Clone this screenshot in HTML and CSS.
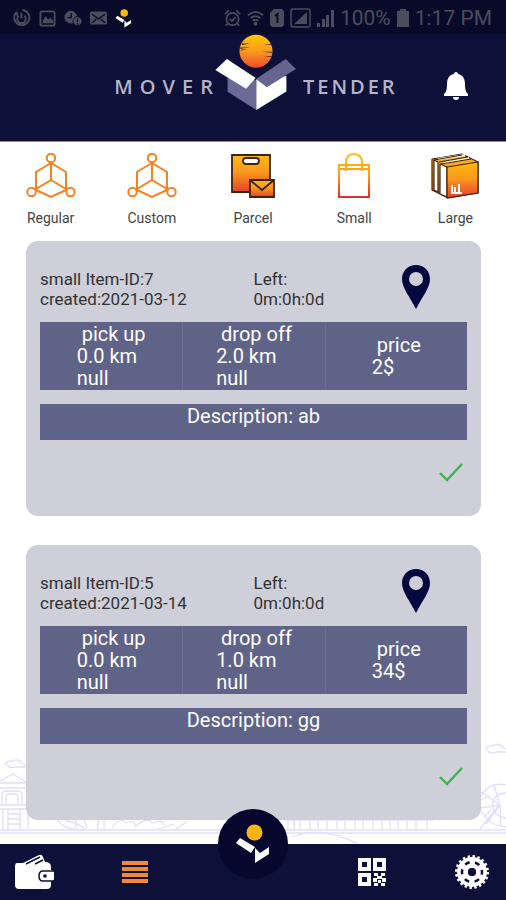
FILE: index.html
```html
<!DOCTYPE html>
<html lang="en">
<head>
<meta charset="utf-8">
<meta name="viewport" content="width=device-width, initial-scale=1">
<title>Mover Tender</title>
<link rel="stylesheet" href="styles.css">
</head>
<body>
<svg class="defs" aria-hidden="true">
  <defs>
    <linearGradient id="sun" x1="0" y1="0" x2="0" y2="1"><stop offset="0" stop-color="#ffc800"/><stop offset=".5" stop-color="#fb9a1c"/><stop offset="1" stop-color="#ef4a30"/></linearGradient>
    <linearGradient id="fire" x1="0" y1="0" x2="0" y2="1"><stop offset="0" stop-color="#fdb913"/><stop offset=".45" stop-color="#f99a1c"/><stop offset="1" stop-color="#e8402a"/></linearGradient>
    <linearGradient id="bagline" gradientUnits="userSpaceOnUse" x1="0" y1="0" x2="0" y2="46"><stop offset="0" stop-color="#fdc010"/><stop offset=".5" stop-color="#f99a1c"/><stop offset="1" stop-color="#dc2430"/></linearGradient>
    <symbol id="cube" viewBox="0 0 50 46">
      <g fill="none" stroke="#f58220" stroke-width="2">
        <circle cx="25" cy="5" r="4.200"/><circle cx="5.500" cy="39" r="4.200"/><circle cx="44.500" cy="39" r="4.200"/>
        <path d="M25 10 10 19v18l15 7 15-7V19L25 10v17L10 36M25 27l15 9"/>
      </g>
    </symbol>
    <symbol id="mark" viewBox="0 0 36 40">
      <circle cx="19.500" cy="8.500" r="8" fill="#fdb515"/>
      <path fill="#fff" d="M5 14 20 23l-4 6L1 19zM20 24l5 5 9-6v7L20 39z"/>
    </symbol>
    <symbol id="pin" viewBox="0 0 28 44"><path fill="#05073f" fill-rule="evenodd" d="M14 0C6 0 0 6 0 14c0 9 8 18 14 30 6-12 14-21 14-30C28 6 22 0 14 0zm0 7a7 7 0 1 1 0 14 7 7 0 0 1 0-14z"/></symbol>
    <symbol id="check" viewBox="0 0 26 20"><path d="m2 11 7 7L24 2" fill="none" stroke="#3db54a" stroke-width="2.400"/></symbol>
  </defs>
</svg>

<div class="app">
  <div class="status">
    <div class="status-group">
      <svg width="19" height="19" viewBox="0 0 20 20"><g fill="none" stroke="currentColor" stroke-width="2"><path d="M5 3a8 8 0 1 0 6-2M5 3v4M7 7a4.500 4.500 0 1 0 6 0M10 4v6"/></g></svg>
      <svg width="17" height="17" viewBox="0 0 18 18"><rect x="1.500" y="1.500" width="15" height="15" rx="2" fill="none" stroke="currentColor" stroke-width="2"/><path fill="currentColor" d="m4 14 0-3 3-4 3 3 2-2 3 4v2z"/></svg>
      <svg width="18" height="17" viewBox="0 0 20 18"><circle cx="7.500" cy="7.500" r="7" fill="currentColor"/><circle cx="15" cy="12" r="5" fill="currentColor" stroke="#0a0b2b"/><path d="M8 3v5H4M15 9v4M15 14v2" fill="none" stroke="#0a0b2b" stroke-width="1.500"/></svg>
      <svg width="17" height="14" viewBox="0 0 18 14"><rect width="18" height="14" rx="2" fill="currentColor"/><path d="m2 3 7 5 7-5M2 12l5-4M16 12l-5-4" fill="none" stroke="#0a0b2b" stroke-width="1.500"/></svg>
      <svg width="17" height="19"><use href="#mark"/></svg>
    </div>
    <div class="status-group status-right">
      <svg width="17" height="18" viewBox="0 0 18 18"><g fill="none" stroke="currentColor" stroke-width="1.800"><circle cx="9" cy="10" r="6.500"/><path d="m6 10 2.500 2.500L12 8M1 5l4-4M17 5l-4-4M4 15l-2 2M14 15l2 2"/></g></svg>
      <svg width="17" height="16" viewBox="0 0 18 16"><g fill="none" stroke="currentColor" stroke-width="2"><path d="M1 5q8-7 16 0M4 8q5-4 10 0M6 11q3-2 6 0"/></g><circle cx="9" cy="14" r="2" fill="currentColor"/></svg>
      <svg width="14" height="18" viewBox="0 0 14 18"><path fill="currentColor" d="M4 0h8l2 2v14l-2 2H2l-2-2V4z"/><path d="m5 7 2.500-2v9" fill="none" stroke="#0a0b2b" stroke-width="2"/></svg>
      <svg width="21" height="20" viewBox="0 0 21 20"><rect x="1" y="1" width="19" height="18" rx="2" fill="none" stroke="currentColor" stroke-width="1.500"/><path fill="currentColor" d="M17 4v12H4z"/></svg>
      <svg width="17" height="18" viewBox="0 0 17 18"><path fill="currentColor" d="M0 14h3v4H0zM5 10h3v8H5zM9 6h3v12H9zM14 1h3v17h-3z"/></svg>
      <span>100%</span>
      <svg width="12" height="18" viewBox="0 0 12 18"><path fill="currentColor" d="M3 0h6v2h3v16H0V2h3z"/></svg>
      <span>1:17 PM</span>
    </div>
  </div>

  <header class="header">
    <div class="brand">
      <span class="word word-mover">MOVER</span>
      <svg class="logo" viewBox="25 18 246 230" aria-hidden="true">
        <circle cx="148" cy="70" r="50" fill="url(#sun)"/>
        <path d="M104 47h26l-24 4zM100 59h32l-32 4zM170 48h24l2 3zM165 72h33v3zM172 85h24l-3 3zM103 65h18l-20 3z" fill="#3d2040"/>
        <path fill="#6a6a96" d="m62 150 87 8v90l-87-55z"/>
        <path fill="#fff" d="m149 155 91-10v47l-91 56z"/>
        <path fill="#fff" d="m60 94 87 57-29 33-93-57z"/>
        <path fill="#66658f" d="m238 94 31 30-88 55-33-25z"/>
      </svg>
      <span class="word word-tender">TENDER</span>
    </div>
    <button class="bell" aria-label="Notifications">
      <svg width="26" height="30" viewBox="0 0 26 30"><path fill="#fff" d="M11 3a2 2 0 0 1 4 0c5 1 7 5 7 10 0 6 1 8 3 10v2H1v-2c2-2 3-4 3-10 0-5 2-9 7-10zM10 26h6q0 3-3 3t-3-3z"/></svg>
    </button>
  </header>

  <nav class="types" aria-label="Item types">
    <a href="#regular"><svg width="50" height="46"><use href="#cube"/></svg>Regular</a>
    <a href="#custom"><svg width="50" height="46"><use href="#cube"/></svg>Custom</a>
    <a href="#parcel"><svg width="44" height="46" viewBox="0 0 44 46"><g stroke="#3c2412" stroke-width="1.800"><path fill="url(#fire)" d="M1 2h38v37H1z"/><rect x="12" y="5" width="16" height="6" rx="3" fill="#fff"/><path fill="url(#fire)" d="M19 27h24v17H19z"/><path fill="none" d="m19 27 12 10 12-10"/></g></svg>Parcel</a>
    <a href="#small"><svg width="34" height="46" viewBox="0 0 34 46"><g fill="none" stroke="url(#bagline)" stroke-width="2"><path d="M2 12h30v32H2zM9 18V10q0-9 8-9t8 9v8M2 16h30"/></g></svg>Small</a>
    <a href="#large"><svg width="48" height="46" viewBox="0 0 48 46"><g stroke="#3c2412" stroke-width="1.200" stroke-linejoin="round"><path fill="url(#fire)" d="M1 6 31 1l16 8v31l-30 5L1 37z"/><path fill="#fff" d="m3 7 4 2v30l-4-2zM9 11l7 3v30l-7-3z"/><path fill="url(#fire)" d="m16 14 31-5v31l-31 5z"/><path fill="none" stroke="#fff" stroke-width="2" d="m7 6 27-4M13 10l25-5"/><path fill="none" d="m3 7 28-5M8 9l29-5M10 11l30-5"/></g><path d="M20 40h11M21 39v-7M24 39v-5M28 39v-8" stroke="#fff" stroke-width="2"/></svg>Large</a>
  </nav>

  <main class="list">
    <svg class="skyline" viewBox="0 0 506 114" preserveAspectRatio="none" aria-hidden="true">
      <g fill="none" stroke="#e2def8" stroke-width="1.300">
        <path d="M5 35q2-5 8-4 6-3 9 2l5 3M7 35q3 4 8 2h12M486 19q2-4 7-3 5-4 9 1l4 2M487 20q4 5 9 2h10"/>
        <path d="M0 51l13-7 13 8M0 53h27M0 58h27M2 75V65q0-4 4-4h12q4 0 4 4v10M6 74V67q0-3 4-3h4q4 0 4 3v7M0 75h35M0 79h35M3 79v20M8 79v20M20 79v20M28 79v20M8 84h12M8 89h12M8 94h12M0 100h506M0 103h506"/>
        <path d="M57 90q10 12 29 9M65 90q16 4 20 10M76 90v8M84 90l3 8M98 90v9M104 90v9M112 98q8-12 14-5 8-4 10 3M135 97q11-11 18-4 9-5 11 2M158 99l16-5M176 99l10-7"/>
        <path d="M288 90v9M294 90v9M300 90v9M310 90v9M318 90v9M327 90v9M337 90v9M345 90v9M355 90v9M363 90v9M373 90v9M382 90v9M390 90v9M398 90v9M407 90v9M416 90v9M427 90v9M285 90h148M292 107q29-12 66 7"/>
        <path d="M506 55q-16-4-25 11-5 10 2 18 8 12 23 13M506 63q-12 0-14 12 2 12 14 13M500 75l-20-14M500 75l-20 3M500 75l-14 19M500 75l1 22M500 75l-6-20M480 70l10-4M484 87l7-7M480 99l20-25"/>
      </g>
    </svg>

    <article class="card">
      <div class="card-head">
        <p>small Item-ID:7<br>created:2021-03-12</p>
        <p>Left:<br>0m:0h:0d</p>
        <button class="pin" aria-label="Show on map"><svg width="28" height="44"><use href="#pin"/></svg></button>
      </div>
      <div class="facts">
        <div><p>&nbsp;pick up<br>0.0 km<br>null</p></div>
        <div><p>&nbsp;drop off<br>2.0 km<br>null</p></div>
        <div><p>&nbsp;price<br>2$</p></div>
      </div>
      <p class="description">Description: ab</p>
      <button class="accept" aria-label="Accept"><svg width="26" height="20"><use href="#check"/></svg></button>
    </article>

    <article class="card">
      <div class="card-head">
        <p>small Item-ID:5<br>created:2021-03-14</p>
        <p>Left:<br>0m:0h:0d</p>
        <button class="pin" aria-label="Show on map"><svg width="28" height="44"><use href="#pin"/></svg></button>
      </div>
      <div class="facts">
        <div><p>&nbsp;pick up<br>0.0 km<br>null</p></div>
        <div><p>&nbsp;drop off<br>1.0 km<br>null</p></div>
        <div><p>&nbsp;price<br>34$</p></div>
      </div>
      <p class="description">Description: gg</p>
      <button class="accept" aria-label="Accept"><svg width="26" height="20"><use href="#check"/></svg></button>
    </article>
  </main>

  <nav class="tabs" aria-label="Main">
    <a href="#wallet" aria-label="Wallet"><svg width="40" height="36" viewBox="0 0 40 36"><path fill="#fff" d="M3 9h6L25 1q3-1 4 2l2 5q6 0 6 5v3h1q2 0 2 2v7q0 2-2 2h-1v4q0 4-4 4H5q-4 0-4-4V13q0-4 2-4z"/><path d="m12 10 14-7M21 10l8-4M40 17H29q-4 0-4 5t4 5h11" fill="none" stroke="#0d1038" stroke-width="1.500"/><circle cx="31" cy="22" r="1.800" fill="#0d1038"/></svg></a>
    <a href="#orders" aria-label="Orders"><svg width="26" height="22" viewBox="0 0 26 22"><path fill="#f08a2c" d="M0 0h26v4H0zM0 6h26v4H0zM0 12h26v4H0zM0 18h26v4H0z"/></svg></a>
    <a class="home" href="#home" aria-label="Home"><svg width="36" height="40"><use href="#mark"/></svg></a>
    <a href="#scan" aria-label="Scan code"><svg width="28" height="28" viewBox="0 0 28 28"><path fill="#fff" fill-rule="evenodd" d="M0 0h13v13H0zM4 4v5h5V4zM15 0h13v13H15zM19 4v5h5V4zM0 15h13v13H0zM4 19v5h5v-5z"/><path fill="#fff" d="M16 15h4v3h-4zM23 15h4v3h-4zM19 18h5v3h-5zM15 20h4v4h-4zM24 20h4v4h-4zM20 22h3v3h-3zM16 25h4v3h-4zM23 25h4v3h-4z"/></svg></a>
    <a href="#settings" aria-label="Settings"><svg width="36" height="36" viewBox="0 0 36 36"><g fill="none" stroke="#fff"><circle cx="18" cy="18" r="15.500" stroke-width="3" stroke-dasharray="2.435"/><circle cx="18" cy="18" r="9.500" stroke-width="11"/></g><circle cx="18" cy="18" r="10" fill="none" stroke="#0d1038" stroke-width="2.500" stroke-dasharray="5 5.472" stroke-dashoffset="2.500"/><circle cx="18" cy="18" r="4" fill="#0d1038"/></svg></a>
  </nav>
</div>
</body>
</html>
```
FILE: styles.css
```css
* { box-sizing: border-box; }
body { margin: 0; background: #fff; color: #333; font-family: Roboto, "Liberation Sans", sans-serif; }
p { margin: 0; }
a { color: inherit; text-decoration: none; }
svg { display: block; flex: none; }
button { padding: 0; border: 0; background: none; font: inherit; cursor: pointer; }
.defs { position: absolute; width: 0; height: 0; }

.app { display: flex; flex-direction: column; min-height: 100vh; }

.status {
  display: flex; align-items: center; justify-content: space-between;
  height: 34px; padding: 2px 14px 0 12px;
  background: #090a2a; color: #4c4c5c; font-size: 21px;
}
.status-group { display: flex; align-items: center; gap: 8px; }
.status-right { gap: 6px; }

.header {
  display: grid; grid-template-columns: 1fr auto 1fr; align-items: center;
  height: 108px; padding: 0 0 12px 6px;
  background: #0d1038; border-bottom: 1px solid #8c86a8;
}
.brand { grid-column: 2; display: flex; align-items: center; }
.word { color: #b4b4c6; font-family: "Open Sans", "Noto Sans", sans-serif; font-size: 20px; font-weight: 600; }
.word-mover { margin-right: -5px; letter-spacing: 7px; }
.word-tender { margin-left: 6px; letter-spacing: 3px; }
.logo { width: 82px; height: 76px; margin-bottom: 28px; }
.bell { justify-self: center; margin-left: 8px; }

.types { display: grid; grid-template-columns: repeat(5, 1fr); padding: 11px 0 15px; }
.types a { display: flex; flex-direction: column; align-items: center; gap: 11px; color: #444; font-size: 14px; line-height: 16px; }

.list { position: relative; flex: 1; display: flex; flex-direction: column; gap: 29px; padding: 0 25px 24px 26px; }
.skyline { position: absolute; left: 0; bottom: 0; width: 100%; height: 114px; }
.card { position: relative; display: flex; flex-direction: column; padding: 24px 14px 34px; border-radius: 12px; background: #cecfd8; }
.card-head { display: grid; grid-template-columns: 2fr 1fr 1fr; align-items: center; min-height: 48px; margin-bottom: 9px; color: #333; font-size: 17px; line-height: 20px; }
.pin { place-self: start center; margin-left: 4px; }
.facts { display: grid; grid-template-columns: repeat(3, 1fr); min-height: 68px; background: #5f6388; color: #fff; font-size: 20px; line-height: 22px; }
.facts div { display: grid; place-items: center; }
.facts div + div { border-left: 1px solid #6b6e92; }
.description { min-height: 36px; margin-top: 14px; background: #5f6388; color: #fff; font-size: 20px; line-height: 24px; text-align: center; }
.accept { align-self: flex-end; margin: 22px 3px 0 0; }

.tabs { display: grid; grid-template-columns: 68px 1fr 104px 1fr 68px; align-items: center; justify-items: center; height: 56px; background: #0d1038; }
.tabs a { position: relative; }
.tabs .home { display: grid; place-items: center; align-self: start; width: 70px; height: 70px; margin: -35px 0 -14px; border-radius: 50%; background: #07062f; }
```
